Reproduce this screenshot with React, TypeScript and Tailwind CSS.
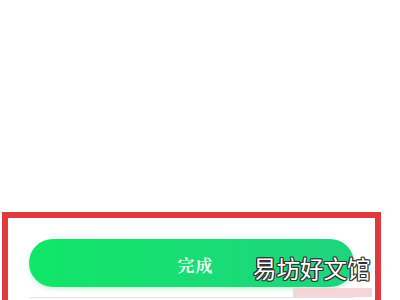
export default function App() {
  return (
    <div className="relative h-[300px] w-[400px] overflow-hidden bg-white">
      <div className="h-[212px]" />
      {/* red highlight frame around the action area */}
      <div className="ml-[2px] h-[88px] w-[379px] border-[6px] border-b-0 border-[#e0393f] px-[21px] pt-[21px]">
        <div className="flex h-[48px] items-center justify-center rounded-full bg-gradient-to-r from-[#10e668] to-[#1fd47e] shadow-[0_2px_4px_rgba(16,220,110,0.25)]">
          <span
            className="pl-[8px] pt-[3px] text-[17px] font-bold tracking-[1px] text-[#eafff2]"
            style={{ fontFamily: '"Noto Serif CJK SC", "Noto Sans CJK SC", serif' }}
          >
            完成
          </span>
        </div>
        <div className="ml-[264px] mt-[1px] h-[9px] w-[79px] bg-[#f3cdd0] opacity-80" />
        <div className="h-[1px] w-full bg-[#e4e4e4]" />
      </div>
      {/* watermark */}
      <div
        className="absolute left-[253px] top-[257px] text-[23.5px] leading-none text-white"
        style={{
          fontFamily: '"Noto Sans CJK SC", sans-serif',
          textShadow:
            '1px 0 0 #333, -1px 0 0 #333, 0 1px 0 #333, 0 -1px 0 #333, 1px 1px 0 #333, -1px -1px 0 #333, 1px -1px 0 #333, -1px 1px 0 #333',
        }}
      >
        易坊好文馆
      </div>
    </div>
  )
}
